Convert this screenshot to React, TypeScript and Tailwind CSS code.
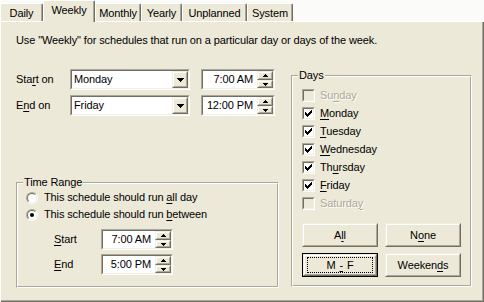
import React from "react";

const U = ({ children }: { children: React.ReactNode }) => (
  <span className="underline decoration-1 underline-offset-[2px]">{children}</span>
);

function Sunken({ className, children, bg = "bg-white" }: { className: string; children?: React.ReactNode; bg?: string }) {
  return (
    <div className={`border border-t-[#ACA899] border-l-[#ACA899] border-b-white border-r-white ${className}`}>
      <div className={`w-full h-full border border-t-[#716F64] border-l-[#716F64] border-b-[#F1EFE2] border-r-[#F1EFE2] flex ${bg}`}>
        {children}
      </div>
    </div>
  );
}

function Raised({ className, children }: { className: string; children?: React.ReactNode }) {
  return (
    <div className={`border border-t-[#F1EFE2] border-l-[#F1EFE2] border-b-[#716F64] border-r-[#716F64] bg-[#ECE9D8] ${className}`}>
      <div className="w-full h-full border border-t-white border-l-white border-b-[#ACA899] border-r-[#ACA899] flex items-center justify-center">
        {children}
      </div>
    </div>
  );
}

function Combo({ value }: { value: string }) {
  return (
    <Sunken className="w-[120px] h-[21px]">
      <div className="flex-1 pl-[2px] leading-[17px]">{value}</div>
      <Raised className="w-[16px] h-[17px]">
        <svg width="7" height="4" shapeRendering="crispEdges">
          <path d="M0 0h7v1H0zM1 1h5v1H1zM2 2h3v1H2zM3 3h1v1H3z" fill="#000" />
        </svg>
      </Raised>
    </Sunken>
  );
}

function Spin({ value, w }: { value: string; w: string }) {
  return (
    <Sunken className={`${w} h-[21px]`}>
      <div className="flex-1 pr-[4px] text-right leading-[17px]">{value}</div>
      <div className="w-[16px] h-[17px] flex flex-col">
        <Raised className="w-[16px] h-[9px]">
          <svg width="5" height="3" shapeRendering="crispEdges">
            <path d="M2 0h1v1H2zM1 1h3v1H1zM0 2h5v1H0z" fill="#000" />
          </svg>
        </Raised>
        <Raised className="w-[16px] h-[8px]">
          <svg width="5" height="3" shapeRendering="crispEdges">
            <path d="M0 0h5v1H0zM1 1h3v1H1zM2 2h1v1H2z" fill="#000" />
          </svg>
        </Raised>
      </div>
    </Sunken>
  );
}

function Check({ checked, disabled }: { checked: boolean; disabled?: boolean }) {
  return (
    <Sunken className="w-[13px] h-[13px]" bg={disabled ? "bg-[#ECE9D8]" : "bg-white"}>
      <div className="w-full h-full flex items-center justify-center">
        {checked && (
          <svg width="7" height="7" shapeRendering="crispEdges">
            <path
              d="M6 0h1v1H6zM5 1h2v1H5zM0 2h1v1H0zM4 2h3v1H4zM0 3h2v1H0zM3 3h3v1H3zM0 4h5v1H0zM1 5h3v1H1zM2 6h1v1H2z"
              fill="#000"
            />
          </svg>
        )}
      </div>
    </Sunken>
  );
}

function Radio({ on }: { on: boolean }) {
  return (
    <div className="w-[12px] h-[12px] rounded-full border border-t-[#ACA899] border-l-[#ACA899] border-b-white border-r-white">
      <div className="w-full h-full rounded-full border border-t-[#716F64] border-l-[#716F64] border-b-[#F1EFE2] border-r-[#F1EFE2] bg-white flex items-center justify-center">
        {on && <div className="w-[4px] h-[4px] rounded-full bg-black" />}
      </div>
    </div>
  );
}

function Btn({ children, def }: { children: React.ReactNode; def?: boolean }) {
  if (def) {
    return (
      <div className="w-[76px] h-[24px] border border-black">
        <Raised className="w-full h-full">
          <div className="w-[66px] h-[16px] border border-dotted border-black flex items-center justify-center leading-[13px]">
            {children}
          </div>
        </Raised>
      </div>
    );
  }
  return (
    <Raised className="w-[76px] h-[24px]">
      <span className="leading-[13px]">{children}</span>
    </Raised>
  );
}

function Group({ label, className, innerH, children }: { label: string; className: string; innerH: string; children: React.ReactNode }) {
  return (
    <div className={`relative ${className}`}>
      <div className={`mt-[6px] ${innerH} border border-t-[#ACA899] border-l-[#ACA899] border-b-white border-r-white`}>
        <div className="w-full h-full border border-t-white border-l-white border-b-[#ACA899] border-r-[#ACA899]">
          {children}
        </div>
      </div>
      <span className="absolute left-[7px] top-0 px-[1px] bg-[#ECE9D8] leading-[13px]">{label}</span>
    </div>
  );
}

const tabs = [
  { t: "Daily", w: "w-[43px]" },
  { t: "Weekly", w: "w-[52px]", sel: true },
  { t: "Monthly", w: "w-[46px]" },
  { t: "Yearly", w: "w-[41px]" },
  { t: "Unplanned", w: "w-[65px]" },
  { t: "System", w: "w-[46px]" },
];

const days: { d: React.ReactNode; on: boolean; dis?: boolean }[] = [
  { d: <>Su<U>n</U>day</>, on: false, dis: true },
  { d: <><U>M</U>onday</>, on: true },
  { d: <><U>T</U>uesday</>, on: true },
  { d: <><U>W</U>ednesday</>, on: true },
  { d: <>Th<U>u</U>rsday</>, on: true },
  { d: <><U>F</U>riday</>, on: true },
  { d: <>Saturda<U>y</U></>, on: false, dis: true },
];

export default function App() {
  return (
    <div className="w-[484px] h-[302px] bg-[#FBFBF9] font-['Liberation_Sans',Arial,sans-serif] text-[11px] tracking-[-0.12px] text-black flex flex-col overflow-hidden">
      <div className="h-[21px] flex items-end relative z-10">
        {tabs.map((tb) =>
          tb.sel ? (
            <div
              key={tb.t}
              className={`${tb.w} h-[22px] -mb-px bg-[#ECE9D8] border-l border-t border-white rounded-tl-[2px] rounded-tr-[2px] border-r border-r-[#716F64] shadow-[inset_-1px_0_#ACA899] flex justify-center pt-[3px] leading-[13px]`}
            >
              {tb.t}
            </div>
          ) : (
            <div
              key={tb.t}
              className={`${tb.w} h-[18px] bg-[#ECE9D8] border-l border-t border-white rounded-tl-[2px] rounded-tr-[2px] border-r border-r-[#716F64] shadow-[inset_-1px_0_#ACA899] flex justify-center pt-[3px] leading-[13px]`}
            >
              {tb.t}
            </div>
          )
        )}
      </div>
      <div className="h-[281px] bg-[#ECE9D8] border-l border-t border-white shadow-[inset_-1px_-1px_#716F64,inset_-2px_-2px_#ACA899] pl-[15px]">
        <div className="mt-[12px] leading-[13px]">Use "Weekly" for schedules that run on a particular day or days of the week.</div>
        <div className="mt-[22px] flex items-start">
          <div className="w-[263px] flex flex-col">
            <div className="flex items-center h-[21px]">
              <div className="w-[54px]">Sta<U>r</U>t on</div>
              <Combo value="Monday" />
              <div className="ml-[11px]">
                <Spin value="7:00 AM" w="w-[74px]" />
              </div>
            </div>
            <div className="flex items-center h-[21px] mt-[5px]">
              <div className="w-[54px]">E<U>n</U>d on</div>
              <Combo value="Friday" />
              <div className="ml-[11px]">
                <Spin value="12:00 PM" w="w-[74px]" />
              </div>
            </div>
            <Group label="Time Range" className="mt-[60px] w-[263px]" innerH="h-[106px]">
              <div className="pl-[8px] pt-[5px] flex flex-col">
                <div className="flex items-center h-[17px] gap-[6px]">
                  <Radio on={false} />
                  <span>This schedule should run <U>a</U>ll day</span>
                </div>
                <div className="flex items-center h-[17px] gap-[6px]">
                  <Radio on={true} />
                  <span>This schedule should run <U>b</U>etween</span>
                </div>
                <div className="flex items-center h-[21px] mt-[6px]">
                  <div className="w-[47px] pl-[28px] box-content"><U>S</U>tart</div>
                  <Spin value="7:00 AM" w="w-[72px]" />
                </div>
                <div className="flex items-center h-[21px] mt-[4px]">
                  <div className="w-[47px] pl-[28px] box-content"><U>E</U>nd</div>
                  <Spin value="5:00 PM" w="w-[72px]" />
                </div>
              </div>
            </Group>
          </div>
          <Group label="Days" className="ml-[12px] w-[181px]" innerH="h-[212px]">
            <div className="pl-[9px] pt-[9px] flex flex-col">
              {days.map((x, i) => (
                <div key={i} className="flex items-center h-[18px] gap-[5px]">
                  <Check checked={x.on} disabled={x.dis} />
                  <span className={x.dis ? "text-[#ACA899] [text-shadow:1px_1px_0_#fff]" : ""}>{x.d}</span>
                </div>
              ))}
              <div className="mt-[11px] flex gap-[7px]">
                <Btn>A<U>l</U>l</Btn>
                <Btn>N<U>o</U>ne</Btn>
              </div>
              <div className="mt-[6px] flex gap-[7px]">
                <Btn def>M<span className="mx-[4px]"><U>-</U></span>F</Btn>
                <Btn>Weeken<U>d</U>s</Btn>
              </div>
            </div>
          </Group>
        </div>
      </div>
    </div>
  );
}
